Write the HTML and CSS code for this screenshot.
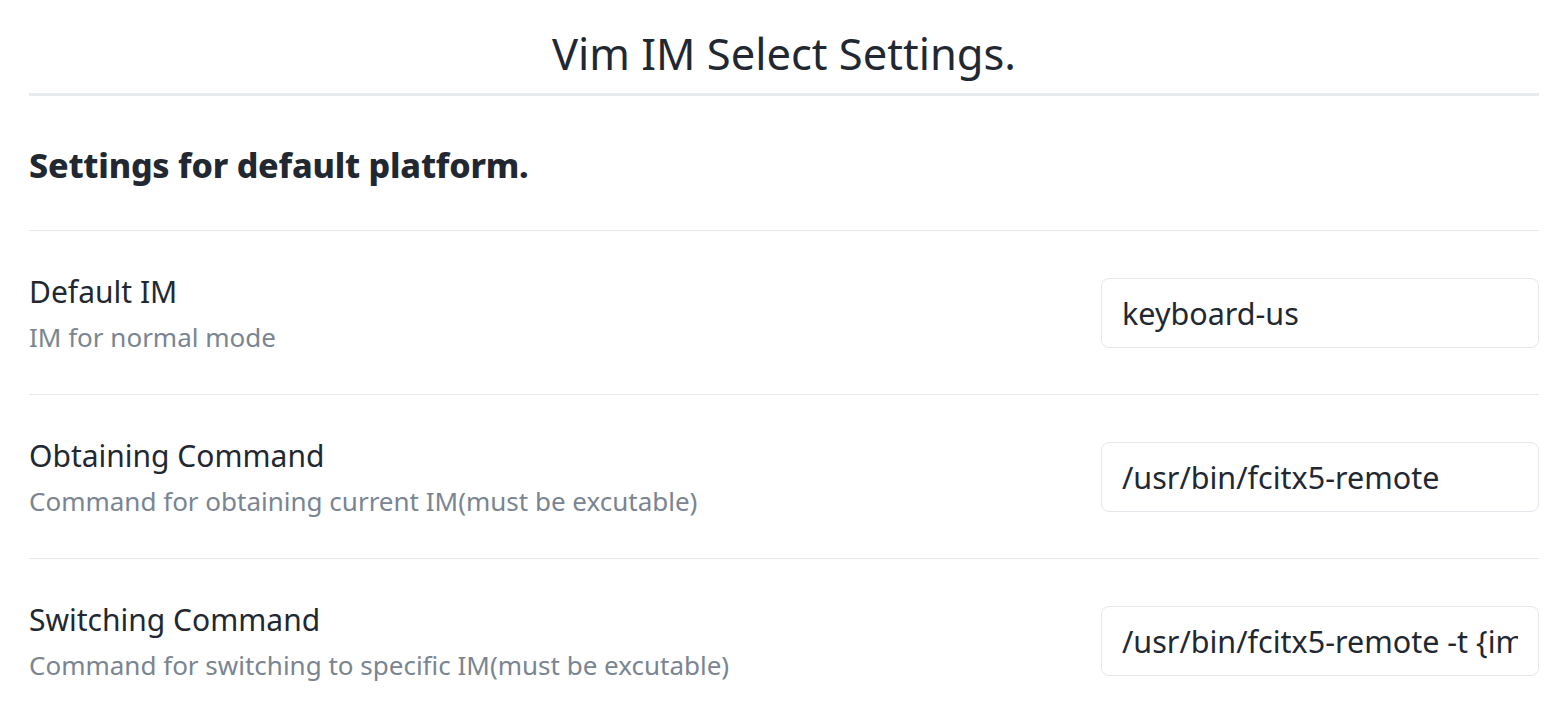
FILE: index.html
```html
<!DOCTYPE html>
<html lang="en">
<head>
<meta charset="utf-8">
<title>Vim IM Select Settings</title>
<link rel="stylesheet" href="styles.css">
</head>
<body>
<div class="settings">
  <h1 class="title">Vim IM Select Settings.</h1>
  <h2 class="section">Settings for default platform.</h2>
  <div class="setting-item">
    <div class="info">
      <div class="name">Default IM</div>
      <div class="desc">IM for normal mode</div>
    </div>
    <div class="control"><input class="text-input" type="text" value="keyboard-us"></div>
  </div>
  <div class="setting-item">
    <div class="info">
      <div class="name">Obtaining Command</div>
      <div class="desc">Command for obtaining current IM(must be excutable)</div>
    </div>
    <div class="control"><input class="text-input" type="text" value="/usr/bin/fcitx5-remote"></div>
  </div>
  <div class="setting-item">
    <div class="info">
      <div class="name">Switching Command</div>
      <div class="desc">Command for switching to specific IM(must be excutable)</div>
    </div>
    <div class="control"><input class="text-input" type="text" value="/usr/bin/fcitx5-remote -t {im}"></div>
  </div>
</div>
</body>
</html>
```
FILE: styles.css
```css
html, body {
  margin: 0;
  padding: 0;
  background: #ffffff;
}
body {
  font-family: "Noto Sans", "Open Sans", sans-serif;
  color: #222831;
}
.settings {
  padding: 0 28px 0 29px;
}
.title {
  margin: 0;
  padding-top: 21px;
  height: 72px;
  font-size: 43.5px;
  font-weight: 400;
  line-height: 64px;
  text-align: center;
  border-bottom: 3px solid #e7eaee;
}
.section {
  margin: 0;
  padding-top: 46px;
  height: 88px;
  font-size: 34px;
  font-weight: 800;
  line-height: 46px;
  letter-spacing: -0.2px;
}
.setting-item {
  display: flex;
  align-items: center;
  justify-content: space-between;
  height: 163px;
  border-top: 1px solid #e6e8eb;
}
.info {
  display: flex;
  flex-direction: column;
  padding-top: 4px;
}
.name {
  font-size: 30px;
  line-height: 40px;
  color: #222831;
}
.desc {
  margin-top: 5px;
  font-size: 26px;
  line-height: 40px;
  color: #7a8591;
}
.control {
  width: 438px;
}
.text-input {
  box-sizing: border-box;
  width: 438px;
  height: 70px;
  padding: 0 20px;
  border: 1.5px solid #e3e7eb;
  border-radius: 8px;
  background: #ffffff;
  font-family: "Noto Sans", "Open Sans", sans-serif;
  font-size: 30.5px;
  color: #222831;
  outline: none;
}
```
